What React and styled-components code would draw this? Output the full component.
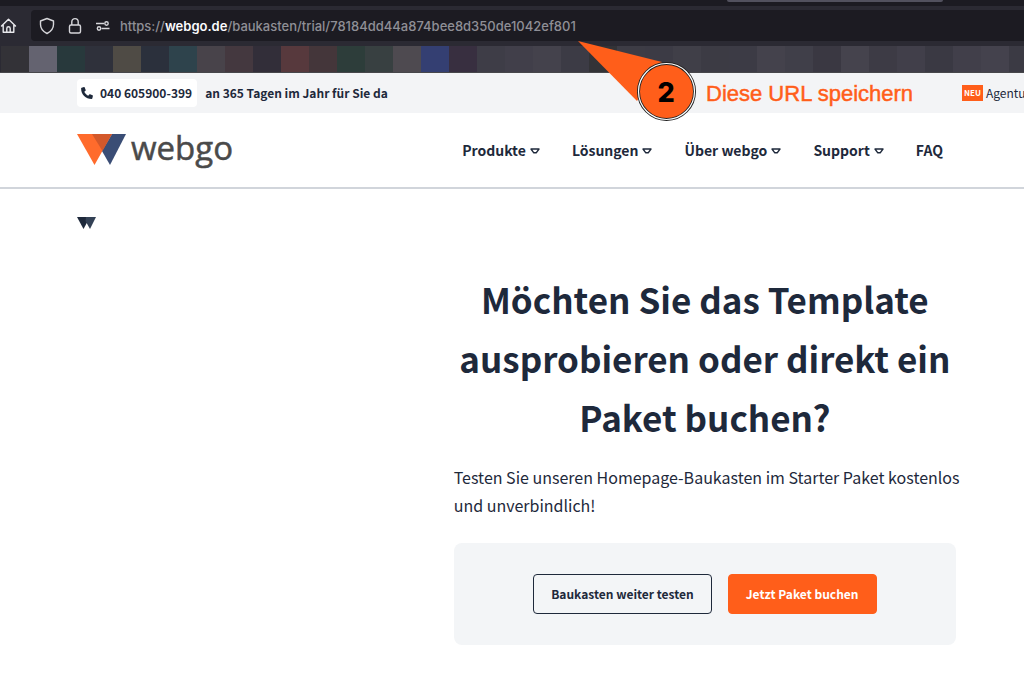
import React from 'react';
import styled, { createGlobalStyle } from 'styled-components';

const sans = '"Noto Sans CJK SC", "Open Sans", sans-serif';
const ui = 'Inter, "Liberation Sans", sans-serif';

const GlobalStyle = createGlobalStyle`
    *, *::before, *::after {
        box-sizing: border-box;
    }
    body {
        margin: 0;
        background: #fff;
        color: #1e293b;
        font-family: ${sans};
        overflow-x: hidden;
    }
    a {
        color: inherit;
        text-decoration: none;
    }
`;

const Page = styled.div`
    position: relative;
    overflow: hidden;
`;

const Browser = styled.div`
    background: #2b2a33;
    border-bottom: 1px solid #47474b;
`;

const TabStrip = styled.div`
    height: 6px;
    padding-left: 727px;
    background: #1c1b22;
`;

const ActiveTab = styled.div`
    width: 216px;
    height: 2px;
    border-radius: 0 0 4px 4px;
    background: #52515e;
`;

const Toolbar = styled.div`
    display: flex;
    align-items: center;
    padding: 4px 0 5px;
`;

const HomeButton = styled.button`
    display: flex;
    width: 31px;
    padding: 0;
    border: 0;
    background: none;
    color: #e8e8ec;
`;

const UrlBar = styled.div`
    display: flex;
    flex: 1;
    align-items: center;
    height: 31px;
    padding-left: 8px;
    border-radius: 4px 0 0 4px;
    background: #1c1b22;
    color: #d6d6da;
`;

const UrlIcons = styled.div`
    display: flex;
    gap: 12px;
    margin-right: 10px;
`;

const Url = styled.span`
    color: #8f8f96;
    font: 500 13px/20px ${ui};
    white-space: nowrap;

    b {
        color: #fbfbfe;
        font-weight: 600;
    }
`;

const Bookmarks = styled.div`
    display: flex;
    height: 26px;
    padding-left: 1px;
    overflow: hidden;
`;

const Bookmark = styled.span`
    flex: 0 0 28px;
    background: ${props => props.$color};
`;

const TopBar = styled.div`
    display: flex;
    align-items: center;
    height: 40px;
    padding-left: 77px;
    background: #f3f4f6;
    font-size: 12px;
    font-weight: 700;
    line-height: 28px;
    white-space: nowrap;
`;

const Phone = styled.a`
    display: flex;
    align-items: center;
    gap: 7px;
    margin-right: 8px;
    padding: 0 5px 0 4px;
    border-radius: 4px;
    background: #fff;
`;

const Offer = styled.a`
    display: flex;
    align-items: center;
    gap: 3px;
    width: 62px;
    margin-left: auto;
    overflow: hidden;
    font-weight: 400;
`;

const Badge = styled.span`
    flex: none;
    padding: 0 2px;
    background: #ff5e1a;
    color: #fff;
    font-size: 8px;
    font-weight: 700;
    line-height: 16px;
`;

const Header = styled.header`
    display: flex;
    align-items: center;
    justify-content: space-between;
    height: 76px;
    padding: 0 81px 0 77px;
    border-bottom: 2px solid #d1d5db;
`;

const Logo = styled.a`
    display: flex;
    align-items: flex-start;
    gap: 5px;
    color: #4a4a4a;
    font: 33px/28px "Open Sans", sans-serif;
    -webkit-text-stroke: 0.5px #4a4a4a;
`;

const Nav = styled.nav`
    display: flex;
    gap: 32px;
    font-size: 14px;
    font-weight: 700;
    line-height: 24px;
`;

const NavLink = styled.a`
    display: flex;
    align-items: center;
    gap: 4px;
    white-space: nowrap;
`;

const Main = styled.main`
    display: grid;
    grid-template-columns: 3fr 4fr;
    padding: 28px 68px 40px 77px;
`;

const HomeLink = styled.a`
    display: flex;
    align-items: flex-start;
`;

const Content = styled.section`
    padding-top: 52px;
`;

const Title = styled.h1`
    margin: 0 0 17px;
    font-size: 35px;
    line-height: 59px;
    text-align: center;
`;

const Text = styled.p`
    margin: 0 -8px 24px 0;
    font-size: 16px;
    line-height: 28px;
`;

const Actions = styled.div`
    display: flex;
    justify-content: center;
    gap: 16px;
    padding: 31px 16px;
    border-radius: 8px;
    background: #f3f5f7;
`;

const Button = styled.button`
    height: 40px;
    padding: 0 17px;
    border: 1px solid ${props => props.$primary ? '#ff5e1a' : '#1e293b'};
    border-radius: 4px;
    background: ${props => props.$primary ? '#ff5e1a' : 'transparent'};
    color: ${props => props.$primary ? '#fff' : '#1e293b'};
    font: 700 12px/20px ${sans};
    white-space: nowrap;
`;

const Callout = styled.div`
    position: absolute;
    top: 41px;
    left: 578px;
    display: flex;
    gap: 10px;
`;

const CalloutText = styled.span`
    padding-top: 39px;
    color: #ff5e1a;
    font: 22px/28px "Liberation Sans", sans-serif;
    text-shadow: 0 0 2px #fff;
    white-space: nowrap;
    -webkit-text-stroke: 0.5px #ff5e1a;
`;

const bookmarks = [
    '#333237', '#646370', '#28393c', '#2f313b', '#4f4b45', '#2b303c', '#2e434c', '#48434a', '#44383f',
    '#322e39', '#57393d', '#44363a', '#2d3d3a', '#384041', '#4e4a50', '#343f72', '#382f40', '#3e3d47',
    '#413f4a', '#44424c', '#3c3b45', '#333337', '#3d3c45', '#3c3b45', '#403f48', '#3c3b44', '#3c3b45',
    '#44424c', '#403f49', '#3a3842', '#45434d', '#3d3b45', '#413f4a', '#3a3943', '#413f4a', '#44424d',
    '#3b3a44',
];

const links = ['Produkte', 'Lösungen', 'Über webgo', 'Support'];

const HomeIcon = () => (
    <svg width="17" height="18" viewBox="0 0 17 18" fill="none" stroke="currentColor" strokeWidth="1.4" strokeLinejoin="round" strokeLinecap="round">
        <path d="M1.5 9 8.5 2.2 15.5 9M3.2 8v7.2h10.6V8" />
        <path d="M6.8 15v-3.5a1.7 1.7 0 0 1 3.4 0V15" />
    </svg>
);

const ShieldIcon = () => (
    <svg width="16" height="18" viewBox="0 0 16 18" fill="none" stroke="currentColor" strokeWidth="1.4" strokeLinejoin="round">
        <path d="M8 1.5 14.5 4v3.5c0 4-2.5 7-6.5 9-4-2-6.5-5-6.5-9V4z" />
    </svg>
);

const LockIcon = () => (
    <svg width="16" height="18" viewBox="0 0 16 18" fill="none" stroke="currentColor" strokeWidth="1.4">
        <rect x="2.5" y="8" width="11" height="8" rx="1.5" />
        <path d="M4.8 8V4.8a3.2 3.2 0 0 1 6.4 0V8" />
    </svg>
);

const PermissionsIcon = () => (
    <svg width="15" height="18" viewBox="0 0 15 18" fill="none" stroke="currentColor" strokeWidth="1.4">
        <path d="M1 6.5h8M6.5 11.5h8" />
        <circle cx="11.5" cy="6.5" r="1.7" />
        <circle cx="4" cy="11.5" r="1.7" />
    </svg>
);

const PhoneIcon = () => (
    <svg width="12" height="12" viewBox="0 0 12 12" fill="currentColor">
        <path d="M.6.8 3 .1c.3 0 .6.1.7.4l1 2.4c.1.3 0 .6-.2.8L3.3 4.8c.8 1.7 2.2 3.1 3.9 3.9l1.1-1.3c.2-.2.5-.3.8-.2l2.4 1c.3.1.5.4.4.7l-.6 2.500c-.1.3-.3.5-.6.5C4.7 11.900.1 7.300.1 1.400.1 1.100.3.900.6.8z" />
    </svg>
);

const Caret = () => (
    <svg width="10" height="10" viewBox="0 0 10 10" fill="none" stroke="currentColor" strokeWidth="1.4" strokeLinejoin="round">
        <path d="M1 4h8L6.2 7.8H3.8z" />
    </svg>
);

const LogoMark = () => (
    <svg width="49" height="32" viewBox="0 0 49 32">
        <path d="M0 0h35L17.5 31z" fill="#ff6b2c" />
        <path d="M35 0h14L33 31l-8-14z" fill="#3a4d75" />
        <path d="M15 0h20L25.5 17z" fill="#d3582a" />
    </svg>
);

const SmallMark = () => (
    <svg width="19" height="12" viewBox="0 0 19 12">
        <path d="M0 0h13L6.5 12z" fill="#1e293b" />
        <path d="M9 0h10l-6 12-4.5-8z" fill="#334155" />
    </svg>
);

const Pointer = () => (
    <svg width="118" height="81" viewBox="0 0 118 81">
        <path d="M0 0 84 21 59 60z" fill="#ff5e1a" />
        <circle cx="88.5" cy="50.5" r="28" fill="#ff5e1a" stroke="#222" strokeWidth="3" />
        <circle cx="88.5" cy="50.5" r="28" fill="none" stroke="#fff" strokeWidth="1.2" />
        <text x="88" y="61" textAnchor="middle" fontFamily="Inter" fontWeight="800" fontSize="27">2</text>
    </svg>
);

export default () => {
    return (
        <Page>
            <GlobalStyle />
            <Browser>
                <TabStrip><ActiveTab /></TabStrip>
                <Toolbar>
                    <HomeButton type="button" aria-label="Startseite"><HomeIcon /></HomeButton>
                    <UrlBar>
                        <UrlIcons>
                            <ShieldIcon />
                            <LockIcon />
                            <PermissionsIcon />
                        </UrlIcons>
                        <Url>https://<b>webgo.de</b>/baukasten/trial/78184dd44a874bee8d350de1042ef801</Url>
                    </UrlBar>
                </Toolbar>
                <Bookmarks>
                    {bookmarks.map((color, i) => <Bookmark key={i} $color={color} />)}
                </Bookmarks>
            </Browser>
            <TopBar>
                <Phone href="tel:040605900399"><PhoneIcon />040 605900-399</Phone>
                <span>an 365 Tagen im Jahr für Sie da</span>
                <Offer href="#"><Badge>NEU</Badge>Agentur</Offer>
            </TopBar>
            <Header>
                <Logo href="#"><LogoMark />webgo</Logo>
                <Nav>
                    {links.map(link => <NavLink href="#" key={link}>{link}<Caret /></NavLink>)}
                    <NavLink href="#">FAQ</NavLink>
                </Nav>
            </Header>
            <Main>
                <HomeLink href="#" aria-label="Start"><SmallMark /></HomeLink>
                <Content>
                    <Title>Möchten Sie das Template ausprobieren oder direkt ein Paket buchen?</Title>
                    <Text>Testen Sie unseren Homepage-Baukasten im Starter Paket kostenlos und unverbindlich!</Text>
                    <Actions>
                        <Button type="button">Baukasten weiter testen</Button>
                        <Button type="button" $primary>Jetzt Paket buchen</Button>
                    </Actions>
                </Content>
            </Main>
            <Callout>
                <Pointer />
                <CalloutText>Diese URL speichern</CalloutText>
            </Callout>
        </Page>
    );
}
